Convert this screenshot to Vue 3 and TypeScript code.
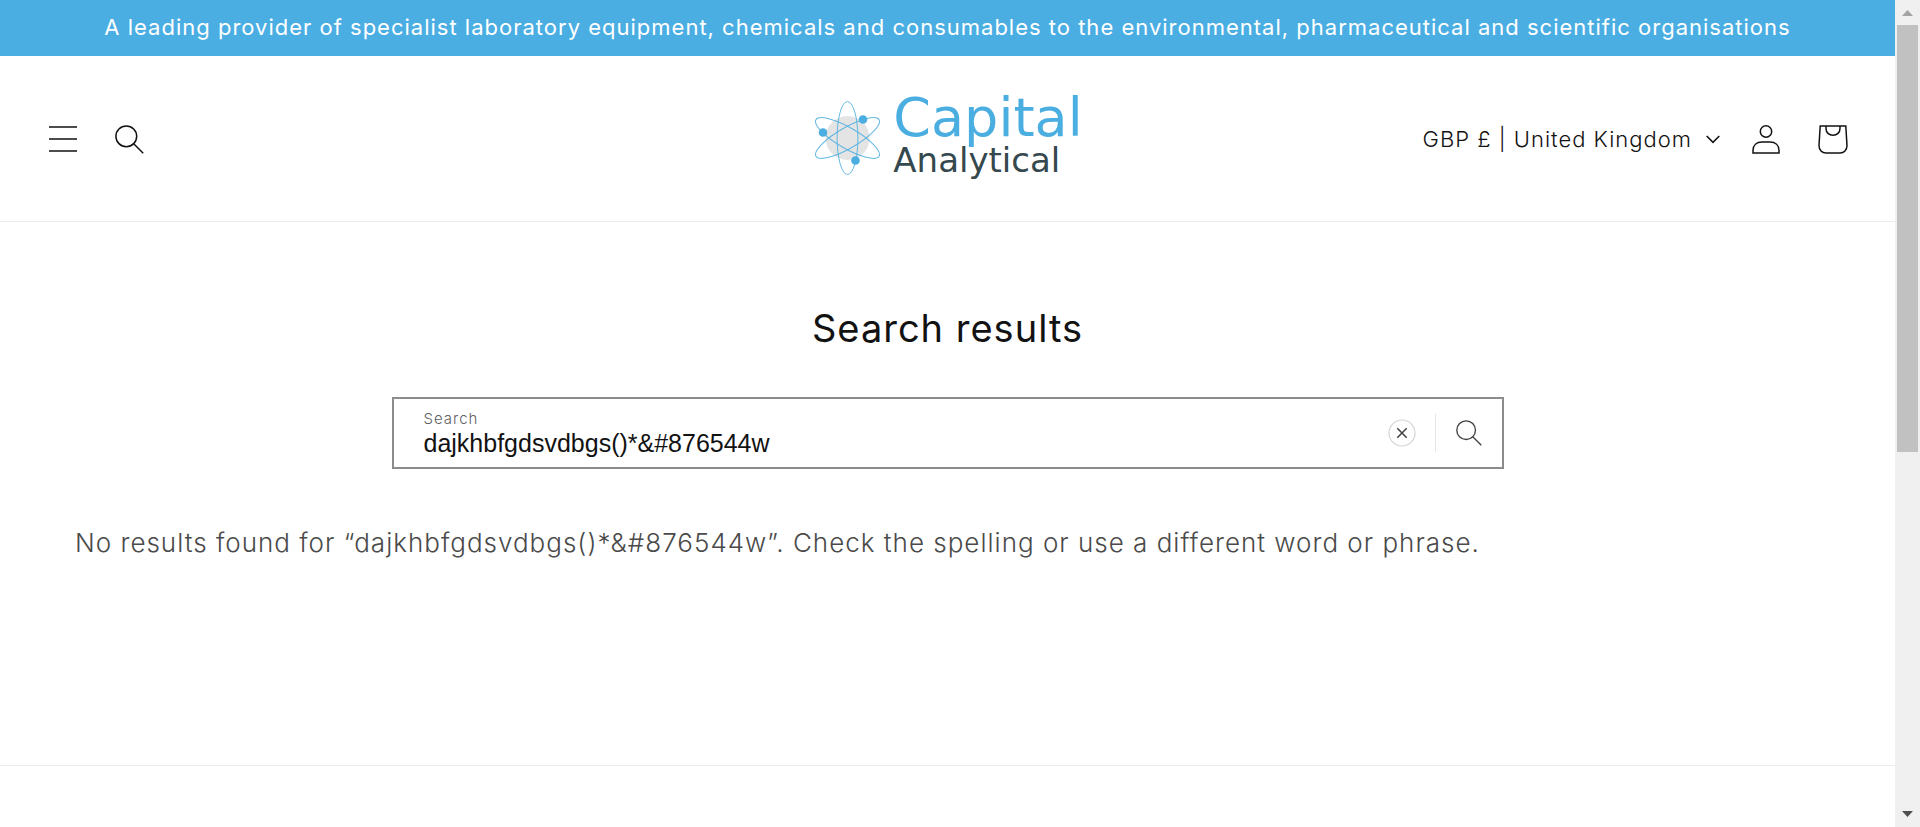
<script setup lang="ts">
import { ref } from 'vue'

const query = ref('dajkhbfgdsvdbgs()*&#876544w')
const submitted = query.value
</script>

<template>
  <div class="window">
    <div class="page">
      <p class="announcement">A leading provider of specialist laboratory equipment, chemicals and consumables to the environmental, pharmaceutical and scientific organisations</p>

      <header class="header">
        <div class="tools">
          <button class="icon-button" type="button" aria-label="Menu">
            <svg width="28" height="26" viewBox="0 0 28 26" fill="none" stroke="currentColor" stroke-width="1.6"><path d="M0 1h28M0 13h28M0 25h28" /></svg>
          </button>
          <button class="icon-button" type="button" aria-label="Open search">
            <svg width="29" height="29" viewBox="0 0 29 29" fill="none" stroke="currentColor" stroke-width="1.5"><circle cx="11.3" cy="11.3" r="10.4" /><path d="M18.7 18.7L28.2 28.2" /></svg>
          </button>
        </div>

        <a class="logo" href="#">
          <svg width="68" height="84" viewBox="0 0 68 84" fill="none" aria-hidden="true">
            <circle cx="33.5" cy="41" r="22" fill="#e4e4e5" />
            <g stroke="#4aaee0" stroke-width="1" opacity=".85">
              <ellipse cx="33.5" cy="41" rx="10.4" ry="36.5" />
              <ellipse cx="33.5" cy="41" rx="10.4" ry="36.5" transform="rotate(60 33.5 41)" />
              <ellipse cx="33.5" cy="41" rx="10.4" ry="36.5" transform="rotate(-60 33.5 41)" />
            </g>
            <g fill="#4aaee0"><circle cx="49" cy="22.5" r="4.3" /><circle cx="9" cy="35.5" r="4.3" /><circle cx="41.5" cy="63.5" r="4.3" /></g>
          </svg>
          <span class="wordmark">
            <span class="word">Capital</span>
            <span class="subword">Analytical</span>
          </span>
        </a>

        <div class="tools tools-end">
          <button class="country" type="button">
            GBP £ | United Kingdom
            <svg width="14" height="9" viewBox="0 0 14 9" fill="none" stroke="currentColor" stroke-width="1.6"><path d="M.7 1L7 7.3L13.3 1" /></svg>
          </button>
          <a class="icon-button" href="#" aria-label="Log in">
            <svg width="28" height="29" viewBox="0 0 28 29" fill="none" stroke="currentColor" stroke-width="1.5"><circle cx="14" cy="6.5" r="5.7" /><path d="M1 28V25.5C1 20.2 4.6 17 10 17H18C23.4 17 27 20.2 27 25.5V28Z" /></svg>
          </a>
          <a class="icon-button" href="#" aria-label="Cart">
            <svg width="30" height="29" viewBox="0 0 30 29" fill="none" stroke="currentColor" stroke-width="1.5"><path d="M2.2 1H27.8L29 20.5C29 25 26 28 22 28H8C4 28 1 25 1 20.5ZM8 1V3.5C8 7.5 11 10.3 15 10.3S22 7.5 22 3.5V1" /></svg>
          </a>
        </div>
      </header>

      <main class="results">
        <h1>Search results</h1>
        <form class="search" role="search" @submit.prevent>
          <div class="field">
            <label for="query">Search</label>
            <input id="query" v-model="query" type="text" autocomplete="off" />
          </div>
          <button class="clear" type="button" aria-label="Clear search term" @click="query = ''">
            <svg width="28" height="28" viewBox="0 0 28 28" fill="none"><circle cx="14" cy="14" r="13" stroke="#d5d5d5" stroke-width="1.2" /><path d="M9.3 9.3L18.7 18.7M18.7 9.3L9.3 18.7" stroke="#404040" stroke-width="1.5" /></svg>
          </button>
          <button class="submit" type="submit" aria-label="Search">
            <svg width="26" height="26" viewBox="0 0 29 29" fill="none" stroke="currentColor" stroke-width="1.5"><circle cx="11.3" cy="11.3" r="10.4" /><path d="M18.7 18.7L28.2 28.2" /></svg>
          </button>
        </form>
        <p class="message">No results found for “{{ submitted }}”. Check the spelling or use a different word or phrase.</p>
      </main>

      <footer class="footer"></footer>
    </div>

    <div class="scrollbar" aria-hidden="true">
      <svg width="25" height="25" viewBox="0 0 25 25"><path d="M7 16L12.5 10L18 16Z" fill="#a3a3a3" /></svg>
      <div class="track"><div class="thumb"></div></div>
      <svg width="25" height="25" viewBox="0 0 25 25"><path d="M7 9L12.5 15L18 9Z" fill="#505050" /></svg>
    </div>
  </div>
</template>

<style>
html,
body {
  margin: 0;
}
</style>

<style scoped>
.window {
  display: flex;
  height: 100vh;
  overflow: hidden;
  background: #fff;
  color: #121212;
  font-family: Inter, "Open Sans", sans-serif;
  letter-spacing: 1px;
}
.page {
  flex: 1;
  min-width: 0;
  display: flex;
  flex-direction: column;
}
.announcement {
  margin: 0;
  padding: 12px 24px 14px;
  background: #4aaee3;
  color: #fff;
  font-size: 22px;
  line-height: 30px;
  text-align: center;
}
.header {
  display: grid;
  grid-template-columns: 1fr auto 1fr;
  align-items: center;
  padding: 41px 47px 40px 49px;
  border-bottom: 1px solid #ebebeb;
}
.tools {
  display: flex;
  align-items: center;
  gap: 38px;
}
.tools-end {
  justify-content: flex-end;
}
button {
  padding: 0;
  border: 0;
  background: none;
  color: inherit;
  font-family: inherit;
  letter-spacing: inherit;
  cursor: pointer;
}
.icon-button {
  display: flex;
  color: #121212;
}
svg {
  display: block;
}
.logo {
  display: flex;
  gap: 11px;
  font-family: "DejaVu Sans", sans-serif;
  letter-spacing: 0;
  line-height: 42px;
  text-decoration: none;
}
.wordmark {
  display: flex;
  flex-direction: column;
}
.word {
  color: #4aaee0;
  font-size: 54px;
}
.subword {
  color: #34484d;
  font-size: 34px;
}
.country {
  display: flex;
  align-items: center;
  gap: 14px;
  margin-right: -6px;
  font-size: 22px;
  font-weight: 300;
  line-height: 30px;
}
.results {
  padding: 82px 75px 0;
}
h1 {
  margin: 0;
  font-size: 38px;
  font-weight: 400;
  line-height: 48px;
  text-align: center;
}
.search {
  display: flex;
  align-items: center;
  box-sizing: border-box;
  max-width: 1112px;
  height: 72px;
  margin: 45px auto 0;
  border: 2px solid #8c8c8c;
}
.field {
  flex: 1;
  display: flex;
  flex-direction: column;
  padding-left: 30px;
}
label {
  color: #606060;
  font-size: 15px;
  font-weight: 300;
  line-height: 20px;
}
input {
  padding: 0;
  border: 0;
  outline: 0;
  background: none;
  color: #121212;
  font-family: "Liberation Sans", Arial, sans-serif;
  font-size: 25px;
  line-height: 28px;
}
.clear {
  padding-right: 19px;
}
.submit {
  padding: 6px 20px;
  border-left: 1px solid #e5e5e5;
  color: #404040;
}
.message {
  margin: 56px 0 0;
  color: #4a4a4a;
  font-size: 26px;
  font-weight: 300;
  line-height: 36px;
}
.footer {
  margin-top: auto;
  height: 61px;
  border-top: 1px solid #ebebeb;
}
.scrollbar {
  display: flex;
  flex-direction: column;
  width: 25px;
  background: #f0f0f0;
}
.track {
  flex: 1;
  padding: 0 2px;
}
.thumb {
  height: 55%;
  background: #c1c1c1;
}
</style>
